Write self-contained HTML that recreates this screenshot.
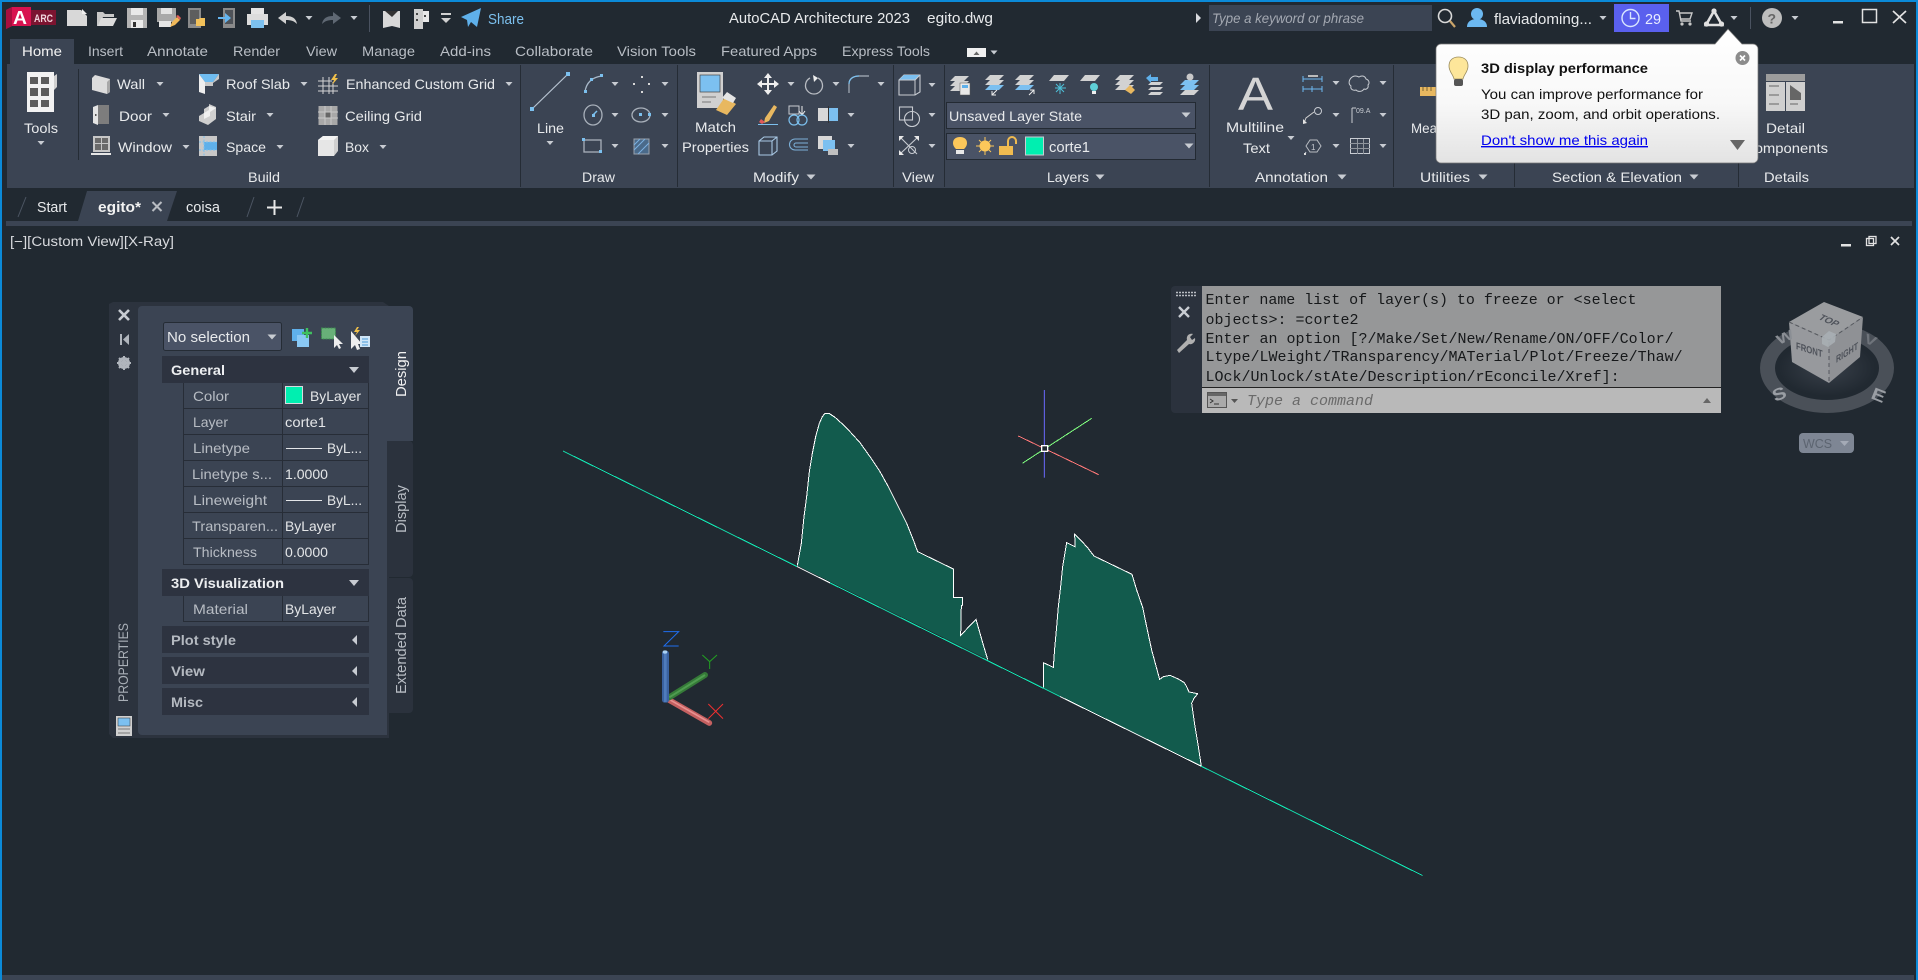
<!DOCTYPE html>
<html><head><meta charset="utf-8"><title>AutoCAD Architecture 2023 egito.dwg</title>
<style>
html,body{margin:0;padding:0;background:#212931;overflow:hidden;width:1918px;height:980px}
svg{display:block;position:absolute;left:0;top:0}
text{font-family:"Liberation Sans",sans-serif;font-size:14px;fill:#e8eaec}
.t{fill:#b9bec5}
.lab{fill:#b8bdc4}
.val{fill:#e4e6e8}
.h{font-weight:bold;fill:#eceef0}
.h2{font-weight:bold;fill:#b4b9c0}
.m{font-family:"Liberation Mono",monospace;font-size:15px;fill:#16181a}
.tip{fill:#111}
.ln{shape-rendering:crispEdges}
</style></head>
<body>
<svg width="1918" height="980" viewBox="0 0 1918 980" xmlns="http://www.w3.org/2000/svg">
<defs>
<path id="c" d="M-3.5-2h7L0 2z" fill="#c8ccd2"/>
<path id="cb" d="M-4.5-2.5h9L0 2.5z" fill="#c8ccd2"/>
<path id="cl" d="M2-5v10l-5-5z" fill="#c8ccd2"/>
<linearGradient id="tg" x1="0" y1="0" x2="0" y2="1"><stop offset="0" stop-color="#fff"/><stop offset=".55" stop-color="#f8f8f8"/><stop offset="1" stop-color="#e3e3e3"/></linearGradient>
<radialGradient id="cg" cx=".5" cy=".5" r=".5"><stop offset="0" stop-color="#39404a"/><stop offset="1" stop-color="#212931"/></radialGradient>
<clipPath id="wh"><rect x="797" y="500" width="33" height="200"/><rect x="1060" y="600" width="141" height="250"/></clipPath>
</defs>

<rect width="1918" height="980" fill="#212931"/>

<!-- window border -->
<rect width="1918" height="2" fill="#0b8ad8"/>
<rect width="2" height="980" fill="#0b8ad8"/>
<rect x="1916" width="2" height="980" fill="#0b8ad8"/>

<!-- LOGO -->
<path d="M6 10l6-3h19v19H12l-6 3z" fill="#d8124f"/>
<path d="M6 10l6-3v19l-6 3z" fill="#a80f3e"/>
<rect x="31" y="10" width="25" height="15" fill="#7c1430"/>
<text x="13" y="24" style="font-size:18px;font-weight:bold;fill:#fff" textLength="14" lengthAdjust="spacingAndGlyphs">A</text>
<text x="34" y="22" style="font-size:11px;font-weight:bold;fill:#f0d5dc" textLength="19" lengthAdjust="spacingAndGlyphs">ARC</text>

<!-- QAT icons -->
<path d="M67 10h14l6 6v10H67z" fill="#d8d8d8"/><path d="M82 9l5 5h-5z" fill="#eee"/>
<path d="M97 26V12h6l2 2h9v3h-11l-3 9z" fill="#c8c8c8"/><path d="M101 18h16l-4 8H98z" fill="#dcdcdc"/>
<path d="M127 8h20v20h-20z" fill="#b4b4b4"/><rect x="131" y="8" width="12" height="7" fill="#e8e8e8"/><rect x="131" y="20" width="12" height="8" fill="#ececec"/><rect x="133" y="22" width="3" height="5" fill="#333"/>
<path d="M157 8h19v14h-19z" fill="#a8a8a8"/><rect x="161" y="8" width="11" height="6" fill="#e2e2e2"/><rect x="159" y="21" width="12" height="6" fill="#e6e6e6"/><path d="M170 27l2-5 5-5 3 3-5 5z" fill="#f0b95a"/><path d="M176 16l2-1 3 3-1 2z" fill="#e0605a"/>
<rect x="188" y="8" width="13" height="20" fill="#8a8a8a"/><rect x="190" y="10" width="9" height="14" fill="#5e5e5e"/><path d="M196 19h3l1-1h5v8h-9z" fill="#f2c15a"/>
<rect x="223" y="8" width="12" height="20" fill="#8a8a8a"/><rect x="225" y="10" width="8" height="14" fill="#4e5258"/><path d="M218 17h7v-4l6 5-6 5v-4h-7z" fill="#64b5f0"/>
<rect x="251" y="8" width="13" height="7" fill="#e4e4e4"/><rect x="247" y="14" width="21" height="11" fill="#dcdcdc"/><rect x="251" y="20" width="13" height="8" fill="#7cc0ee"/>
<path d="M278 18l8-6v4c6 0 10 2 11 8-3-3-6-4-11-4v4z" fill="#d0d0d0"/>
<use href="#c" x="309" y="18"/>
<path d="M341 18l-8-6v4c-6 0-10 2-11 8 3-3 6-4 11-4v4z" fill="#5f6873"/>
<use href="#c" x="354" y="18"/>
<rect x="369" y="5" width="1" height="27" fill="#4a5260"/>
<path d="M383 11h17v17l-8-2-9 2z" fill="#d8d8d8"/><path d="M385 11h13l-6 6z" fill="#333"/>
<rect x="414" y="9" width="9" height="20" fill="#cfcfcf"/><rect x="423" y="11" width="6" height="11" fill="#e8e8e8"/><rect x="416" y="13" width="2" height="2" fill="#444"/><rect x="416" y="19" width="2" height="2" fill="#444"/><rect x="424" y="15" width="2" height="2" fill="#444"/>
<rect x="441" y="13" width="10" height="2" fill="#d0d0d0"/><path d="M441 18h10l-5 5z" fill="#d0d0d0"/>
<path d="M461 17l20-9-4 19-6-5-3 5-1-7z" fill="#5fb0ea"/>
<text x="488" y="24" style="fill:#7cc0ee;font-size:15px" textLength="36" lengthAdjust="spacingAndGlyphs">Share</text>

<!-- title -->
<text x="729" y="23" style="font-size:15px" textLength="181" lengthAdjust="spacingAndGlyphs">AutoCAD Architecture 2023</text>
<text x="927" y="23" style="font-size:15px" textLength="66" lengthAdjust="spacingAndGlyphs">egito.dwg</text>

<!-- title right -->
<path d="M1196 13l5 5-5 5z" fill="#d8dade"/>
<rect x="1209" y="5" width="223" height="26" fill="#3b4453"/>
<text x="1212" y="23" style="font-style:italic;fill:#a4a9b2" textLength="152" lengthAdjust="spacingAndGlyphs">Type a keyword or phrase</text>
<circle cx="1445" cy="16" r="6.5" fill="none" stroke="#d8d8d8" stroke-width="1.6"/><path d="M1450 21l5 6" stroke="#c9a46a" stroke-width="2.2"/>
<circle cx="1477" cy="14" r="6" fill="#6cb8f0"/><path d="M1467 27c0-6 5-8 10-8s10 2 10 8z" fill="#6cb8f0"/>
<text x="1494" y="24" style="font-size:15px" textLength="98" lengthAdjust="spacingAndGlyphs">flaviadoming...</text>
<use href="#c" x="1603" y="18"/>
<rect x="1614" y="4" width="55" height="28" fill="#5a60ee"/>
<circle cx="1630.5" cy="18" r="8.5" fill="none" stroke="#d8e6ff" stroke-width="1.4"/><path d="M1630.5 12v6.5h5" fill="none" stroke="#d8e6ff" stroke-width="1.4"/>
<text x="1645" y="24" style="font-size:15px;fill:#e8ecff" textLength="16" lengthAdjust="spacingAndGlyphs">29</text>
<path d="M1676 11h3l2 10h10M1680 13h12l-2 6h-9" fill="none" stroke="#c8c8c8" stroke-width="1.4"/><circle cx="1682" cy="24" r="1.6" fill="#c8c8c8"/><circle cx="1690" cy="24" r="1.6" fill="#c8c8c8"/>
<path d="M1714 11l-8 14h16z" fill="none" stroke="#e0e0e0" stroke-width="2.6"/><circle cx="1714" cy="11" r="2.6" fill="#e0e0e0"/><circle cx="1706.5" cy="24" r="2.6" fill="#e0e0e0"/><circle cx="1721.5" cy="24" r="2.6" fill="#e0e0e0"/>
<use href="#c" x="1734" y="18"/>
<rect x="1750" y="7" width="1" height="22" fill="#4a5260"/>
<circle cx="1772" cy="18" r="10" fill="#bdbdbd"/><text x="1767.5" y="23.5" style="font-size:14px;font-weight:bold;fill:#666">?</text>
<use href="#c" x="1795" y="18"/>
<rect x="1833" y="21" width="10" height="2.5" fill="#e2e2e2"/>
<rect x="1862.5" y="9.5" width="14" height="13" fill="none" stroke="#e2e2e2" stroke-width="1.5"/>
<path d="M1893 11l13 12M1906 11l-13 12" stroke="#e2e2e2" stroke-width="1.7"/>

<!-- TABS -->
<rect x="10" y="39" width="64" height="26" fill="#3b4453"/>
<g class="tabs">
<text x="22" y="56" style="fill:#f2f2f2" textLength="40" lengthAdjust="spacingAndGlyphs">Home</text>
<text x="88" y="56" class="t" textLength="35" lengthAdjust="spacingAndGlyphs">Insert</text>
<text x="147" y="56" class="t" textLength="61" lengthAdjust="spacingAndGlyphs">Annotate</text>
<text x="233" y="56" class="t" textLength="47" lengthAdjust="spacingAndGlyphs">Render</text>
<text x="306" y="56" class="t" textLength="31" lengthAdjust="spacingAndGlyphs">View</text>
<text x="362" y="56" class="t" textLength="53" lengthAdjust="spacingAndGlyphs">Manage</text>
<text x="440" y="56" class="t" textLength="51" lengthAdjust="spacingAndGlyphs">Add-ins</text>
<text x="515" y="56" class="t" textLength="78" lengthAdjust="spacingAndGlyphs">Collaborate</text>
<text x="617" y="56" class="t" textLength="79" lengthAdjust="spacingAndGlyphs">Vision Tools</text>
<text x="721" y="56" class="t" textLength="96" lengthAdjust="spacingAndGlyphs">Featured Apps</text>
<text x="842" y="56" class="t" textLength="88" lengthAdjust="spacingAndGlyphs">Express Tools</text>
</g>
<rect x="967" y="48" width="19" height="9" fill="#f0f0f0"/><path d="M973.5 55l3-3.5 3 3.5z" fill="#666"/>
<use href="#c" x="994" y="52.5"/>

<!-- RIBBON -->
<rect x="7" y="64" width="1907" height="124" fill="#3b4453"/>
<g fill="#252c35">
<rect x="78" y="69" width="1" height="91"/>
<rect x="520" y="65" width="1" height="122"/>
<rect x="677" y="65" width="1" height="122"/>
<rect x="893" y="65" width="1" height="122"/>
<rect x="944" y="65" width="1" height="122"/>
<rect x="1209" y="65" width="1" height="122"/>
<rect x="1393" y="65" width="1" height="122"/>
<rect x="1514" y="65" width="1" height="122"/>
<rect x="1738" y="65" width="1" height="122"/>
</g>

<!-- panel titles -->
<text x="248" y="182" textLength="32" lengthAdjust="spacingAndGlyphs">Build</text>
<text x="582" y="182" textLength="33" lengthAdjust="spacingAndGlyphs">Draw</text>
<text x="753" y="182" textLength="46" lengthAdjust="spacingAndGlyphs">Modify</text><use href="#cb" x="811" y="177"/>
<text x="902" y="182" textLength="32" lengthAdjust="spacingAndGlyphs">View</text>
<text x="1047" y="182" textLength="42" lengthAdjust="spacingAndGlyphs">Layers</text><use href="#cb" x="1100" y="177"/>
<text x="1255" y="182" textLength="73" lengthAdjust="spacingAndGlyphs">Annotation</text><use href="#cb" x="1342" y="177"/>
<text x="1420" y="182" textLength="50" lengthAdjust="spacingAndGlyphs">Utilities</text><use href="#cb" x="1483" y="177"/>
<text x="1552" y="182" textLength="130" lengthAdjust="spacingAndGlyphs">Section &amp; Elevation</text><use href="#cb" x="1694" y="177"/>
<text x="1764" y="182" textLength="45" lengthAdjust="spacingAndGlyphs">Details</text>

<!-- Tools -->
<rect x="27" y="72" width="27" height="40" fill="#f2f2f2"/><path d="M54 76l3-2v13l-3 3z" fill="#d0d0d0"/>
<g fill="#5c5c5c"><rect x="30" y="77" width="8" height="7"/><rect x="41" y="77" width="8" height="7"/><rect x="30" y="88" width="8" height="8"/><rect x="41" y="88" width="8" height="8"/><rect x="30" y="100" width="8" height="7"/><rect x="41" y="100" width="8" height="7"/></g>
<text x="24" y="133" textLength="34" lengthAdjust="spacingAndGlyphs">Tools</text>
<use href="#c" x="41" y="143"/>

<!-- Build -->
<path d="M92 78l3-3 15 4v13l-3 2-15-4z" fill="#dcdcdc"/><path d="M107 82l3-3v13l-3 2z" fill="#a8a8a8"/>
<text x="117" y="89" textLength="28" lengthAdjust="spacingAndGlyphs">Wall</text><use href="#c" x="160" y="84"/>
<path d="M98 105l11 0v19H98z" fill="#7d7d7d"/><path d="M93 107l5-2v20l-5-2z" fill="#e4e4e4"/><rect x="95" y="114" width="1.5" height="2" fill="#555"/>
<text x="119" y="121" textLength="33" lengthAdjust="spacingAndGlyphs">Door</text><use href="#c" x="166" y="115"/>
<rect x="93" y="136" width="17" height="16" fill="#c6c6c6"/><g fill="#6a6a6a"><rect x="95" y="138" width="6" height="5"/><rect x="102" y="138" width="6" height="5"/><rect x="95" y="144" width="6" height="6"/><rect x="102" y="144" width="6" height="6"/></g><rect x="91" y="153" width="20" height="2" fill="#e6e6e6"/>
<text x="118" y="152" textLength="54" lengthAdjust="spacingAndGlyphs">Window</text><use href="#c" x="186" y="147"/>

<path d="M199 74h20l-6 8h-8z" fill="#6fbcf0"/><path d="M199 74l6 8v12l-6-2z" fill="#efefef"/><path d="M205 82h8l6-8v5l-6 4v3h-8z" fill="#c8c8c8"/>
<text x="226" y="89" textLength="64" lengthAdjust="spacingAndGlyphs">Roof Slab</text><use href="#c" x="304" y="84"/>
<path d="M199 116l5-3v-4l5-3v-2l7 3v12l-8 6-9-4z" fill="#cfcfcf"/><path d="M204 113l5-3v-4l7 2-6 4v4l-6 3z" fill="#f0f0f0"/>
<text x="226" y="121" textLength="30" lengthAdjust="spacingAndGlyphs">Stair</text><use href="#c" x="270" y="115"/>
<rect x="199" y="136" width="18" height="20" fill="#c8c8c8"/><rect x="204" y="142" width="13" height="8" fill="#5fb0ea"/><path d="M204 136v20M199 142h18M199 150h18" stroke="#7cc0ee" stroke-width="1" stroke-dasharray="2 1.5" fill="none"/>
<text x="226" y="152" textLength="40" lengthAdjust="spacingAndGlyphs">Space</text><use href="#c" x="280" y="147"/>

<path d="M323 77v17M329 77v17M333 82v12M318 81h14M318 86h20M318 91h20" stroke="#d4d4d4" stroke-width="1" fill="none"/><path d="M335 74l-4 6h3l-2 5 6-7h-3l2-4z" fill="#f0c04a"/>
<text x="346" y="89" textLength="149" lengthAdjust="spacingAndGlyphs">Enhanced Custom Grid</text><use href="#c" x="509" y="84"/>
<rect x="318.500" y="106" width="19" height="19" fill="#a8a8a8"/><path d="M325 106v19M331 106v19M318 112h20M318 118h20" stroke="#c8c8c8"/><rect x="325.500" y="112.500" width="5" height="5" fill="#666"/>
<text x="345" y="121" textLength="77" lengthAdjust="spacingAndGlyphs">Ceiling Grid</text>
<path d="M318 140l5-4h15v15l-4 5h-16z" fill="#cfcfcf"/><path d="M318 140h16v16h-16z" fill="#e6e6e6"/><path d="M318 140l5-4h15l-4 4z" fill="#f4f4f4"/>
<text x="345" y="152" textLength="24" lengthAdjust="spacingAndGlyphs">Box</text><use href="#c" x="383" y="147"/>

<!-- Draw -->
<path d="M532 109l36-35" stroke="#b8c4d2" stroke-width="1.2"/><rect x="530" y="107" width="4" height="4" fill="#7cc0ee"/><rect x="566" y="72" width="4" height="4" fill="#7cc0ee"/>
<text x="537" y="133" textLength="27" lengthAdjust="spacingAndGlyphs">Line</text><use href="#c" x="550" y="143"/>
<path d="M585 92c1-9 7-15 17-16" fill="none" stroke="#a8b8c8" stroke-width="1.3"/><rect x="584" y="90" width="3" height="3" fill="#7cc0ee"/><rect x="590" y="78" width="3" height="3" fill="#7cc0ee"/><rect x="600" y="74" width="3" height="3" fill="#7cc0ee"/><use href="#c" x="615" y="84"/>
<g fill="#d8d8d8"><rect x="633" y="83" width="2" height="2"/><rect x="641" y="76" width="2" height="2"/><rect x="648" y="83" width="2" height="2"/><rect x="641" y="91" width="2" height="2"/></g><use href="#c" x="665" y="84"/>
<ellipse cx="593" cy="115" rx="9" ry="10" fill="none" stroke="#a8b0ba" stroke-width="1.3"/><path d="M593 115l4-4" stroke="#7cc0ee" stroke-width="1.5"/><rect x="592" y="114" width="3" height="3" fill="#7cc0ee"/><use href="#c" x="615" y="115"/>
<ellipse cx="641" cy="115" rx="9" ry="7" fill="none" stroke="#a8b0ba" stroke-width="1.3"/><rect x="639" y="113" width="3" height="3" fill="#7cc0ee"/><rect x="648" y="113" width="3" height="3" fill="#7cc0ee"/><use href="#c" x="665" y="115"/>
<rect x="584" y="140" width="17" height="12" fill="none" stroke="#a8b0ba" stroke-width="1.3"/><rect x="582" y="138" width="3" height="3" fill="#7cc0ee"/><rect x="599" y="150" width="3" height="3" fill="#7cc0ee"/><use href="#c" x="615" y="146"/>
<rect x="634" y="139" width="15" height="15" fill="#4a6a8a" stroke="#9aa2ac"/><path d="M634 150l11-11M638 154l11-11M634 145l6-6" stroke="#7cb0e0"/><use href="#c" x="665" y="146"/>

<!-- Modify -->
<rect x="697" y="72" width="26" height="36" fill="#d0d0d0"/><rect x="700" y="75" width="20" height="17" fill="#7cc0f0" stroke="#444" stroke-width=".7"/><path d="M702 97h14M702 102h9" stroke="#777"/><path d="M716 110l9-13 11 7-9 11z" fill="#e8b860"/><path d="M722 98l5-6 9 6-3 5z" fill="#e4e4e4"/>
<text x="695" y="132" textLength="41" lengthAdjust="spacingAndGlyphs">Match</text>
<text x="682" y="152" textLength="67" lengthAdjust="spacingAndGlyphs">Properties</text>
<path d="M768 73l4 5h-3v5h5v-3l5 4-5 4v-3h-5v5h3l-4 5-4-5h3v-5h-5v3l-5-4 5-4v3h5v-5h-3z" fill="#eee"/><use href="#c" x="791" y="84"/>
<path d="M818 78a8.5 8.5 0 1 1-8 0" fill="none" stroke="#b8bcc2" stroke-width="1.3"/><path d="M813 75l5 3-4 4z" fill="#eee"/><use href="#c" x="836" y="84"/>
<path d="M849 93V84c0-5 4-8 10-8h10" fill="none" stroke="#a8b0ba" stroke-width="1.2"/><path d="M849 84c0-5 4-8 10-8" fill="none" stroke="#7cc0ee" stroke-width="1.2"/><use href="#c" x="881" y="84"/>
<path d="M765 118l9-13 3 2-8 14-5 2z" fill="#e8b860"/><path d="M761 119l4 3-3 2-3-2z" fill="#e05a5a"/><rect x="758" y="124" width="20" height="1" fill="#7cc0ee"/>
<rect x="789" y="106" width="10" height="8" fill="none" stroke="#c8ccd2"/><path d="M802 106v8m-3-3l3 4 3-4" stroke="#eee" fill="none"/><circle cx="794" cy="120" r="5" fill="none" stroke="#7cc0ee" stroke-width="1.2"/><circle cx="802" cy="120" r="5" fill="none" stroke="#7cc0ee" stroke-width="1.2"/>
<rect x="818" y="108" width="10" height="13" fill="#d8d8d8"/><rect x="829" y="108" width="9" height="13" fill="#7cc0f0"/><rect x="828" y="106" width="1" height="17" fill="#333"/><use href="#c" x="851" y="115"/>
<path d="M759 141l5-4h13v14l-5 4h-13zM759 141h13v14M772 141l5-4" fill="none" stroke="#a8c8e4" stroke-width="1.1"/>
<path d="M808 139h-13a5 5 0 0 0 0 11h13M808 143h-12a2 2 0 0 0 0 4h12" fill="none" stroke="#7cb0d8" stroke-width="1.1"/>
<rect x="818" y="136" width="14" height="13" fill="#d8d8d8"/><rect x="823" y="140" width="12" height="11" fill="#7cc0f0"/><rect x="828" y="149" width="10" height="6" fill="#c0c0c0"/><use href="#c" x="851" y="146"/>

<!-- View -->
<path d="M899 80l5-5h16v17l-5 3h-16z" fill="none" stroke="#c8ccd2" stroke-width="1.1"/><path d="M899 80l5-5h16l-5 5z" fill="#7cc0f0"/><path d="M899 80h16v15M915 80l5-5" fill="none" stroke="#c8ccd2" stroke-width="1"/><use href="#c" x="932" y="85"/>
<rect x="899.500" y="107" width="13" height="13" fill="none" stroke="#c8ccd2" stroke-width="1.1"/><circle cx="912" cy="119" r="7.5" fill="none" stroke="#c8ccd2" stroke-width="1.1"/><use href="#c" x="932" y="115"/>
<path d="M900 137l17 17M918 137l-18 17" stroke="#c8ccd2" stroke-width="1.1"/><path d="M899 136h5l-5 5zM919 136h-5l5 5zM899 155h5l-5-5z" fill="#e8e8e8"/><circle cx="912" cy="150" r="3.5" fill="none" stroke="#c8ccd2"/><use href="#c" x="932" y="146"/>

<!-- Layers row -->
<g fill="#d2d2d2">
<path d="M950 81l5-5h14l-5 5zM950 86l5-5h14l-5 5zM950 91l5-5h14l-5 5z"/><rect x="960" y="83" width="10" height="12" fill="#e8e8e8" stroke="#555" stroke-width=".5"/><rect x="962" y="85" width="6" height="3" fill="#5fb0ea"/>
<path d="M985 80l5-5h14l-5 5zM985 85l5-5h14l-5 5z"/><path d="M985 90l5-5h14l-5 5z" fill="#7cc0f0"/><path d="M997 90l-5 5m0-4v4h4" stroke="#eee" fill="none"/>
<path d="M1015 80l5-5h14l-5 5zM1015 85l5-5h14l-5 5z"/><path d="M1015 90l5-5h14l-5 5z" fill="#7cc0f0"/><path d="M1029 95l5-5m-4 0h4v4" stroke="#eee" fill="none"/>
<path d="M1049 81l5-6h15l-5 6z"/><path d="M1060 83v11M1055 88h11M1056 84l8 8M1064 84l-8 8" stroke="#4ec0d8" fill="none"/>
<path d="M1080 81l5-6h15l-5 6z"/><circle cx="1094" cy="87" r="4" fill="#5fd0d8"/><rect x="1092" y="91" width="4" height="3" fill="#eee"/>
<path d="M1115 80l5-5h14l-5 5zM1115 85l5-5h14l-5 5zM1115 90l5-5h14l-5 5z"/><path d="M1125 90l5-5 5 5-4 4z" fill="#e8b860"/>
<path d="M1151 82h12l-3 3h-12zM1151 87h12l-3 3h-12zM1151 92h12l-3 3h-12z"/><path d="M1146 78l5-4v3h7v4h-7v2z" fill="#5fb0ea"/>
<path d="M1180 85l5-5h14l-5 5zM1180 90l5-5h14l-5 5z" fill="#7cc0f0"/><path d="M1180 95l5-5h14l-5 5z"/><circle cx="1190" cy="77" r="3.5" fill="#c8c8c8"/>
</g>

<!-- Layer combos -->
<rect x="946.500" y="102.500" width="249" height="26" fill="#4a5366" stroke="#232a33"/>
<text x="949" y="121" textLength="133" lengthAdjust="spacingAndGlyphs">Unsaved Layer State</text><use href="#cb" x="1186" y="115"/>
<rect x="946.500" y="133.500" width="249" height="26" fill="#4a5366" stroke="#232a33"/>
<path d="M953 143c0-4 3-6 7-6s7 2 7 6c0 3-2 5-3 6h-8c-1-1-3-3-3-6z" fill="#fcc75a"/><rect x="956" y="150" width="8" height="4" fill="#e8e8e8"/>
<circle cx="985" cy="146" r="5.5" fill="#fcc75a"/><path d="M985 137v18M976 146h18M979 140l12 12M991 140l-12 12" stroke="#fcc75a" stroke-width="1"/>
<rect x="999" y="146" width="14" height="9" fill="#f0bb50"/><path d="M1008 146v-5a4 4 0 0 1 8 0v3" fill="none" stroke="#f0bb50" stroke-width="2"/>
<rect x="1025.500" y="137" width="18" height="18" fill="#00efb0" stroke="#c8ccd2"/>
<text x="1049" y="152" style="font-size:15px" textLength="41" lengthAdjust="spacingAndGlyphs">corte1</text><use href="#cb" x="1189" y="146"/>

<!-- Annotation -->
<text x="1238" y="110" style="font-size:46px;fill:#d4d4d4" textLength="35" lengthAdjust="spacingAndGlyphs">A</text>
<text x="1226" y="132" textLength="58" lengthAdjust="spacingAndGlyphs">Multiline</text>
<text x="1243" y="153" textLength="27" lengthAdjust="spacingAndGlyphs">Text</text>
<use href="#c" x="1291" y="138"/>
<path d="M1303 79h19M1303 89h19M1303 76v6M1322 76v6M1303 86v6M1322 86v6M1312 86v6" stroke="#6cb8f0" fill="none"/><rect x="1308" y="75" width="10" height="2" fill="#bbb"/><use href="#c" x="1336" y="83"/>
<path d="M1351 78c3-3 6-2 8-1 3-2 6-1 7 2 3 1 4 4 2 6 1 3-2 5-4 4-2 3-6 3-8 1-3 1-6-1-5-4-3-2-2-6 0-8z" fill="none" stroke="#c8ccd2" stroke-width="1"/><use href="#c" x="1383" y="83"/>
<path d="M1304 123l2-5 8-6" fill="none" stroke="#d0d0d0"/><path d="M1303 124v-5l4 4z" fill="#e4e4e4"/><circle cx="1318" cy="111" r="3.5" fill="none" stroke="#c8ccd2"/><use href="#c" x="1336" y="115"/>
<path d="M1352 108v15M1352 108h4" stroke="#c8ccd2" fill="none"/><text x="1356" y="113" style="font-size:7px;fill:#c8ccd2">09.A</text><use href="#c" x="1383" y="115"/>
<path d="M1306 146l4-6h7l4 6-4 6h-7z" fill="none" stroke="#b8bcc2"/><text x="1311" y="150" style="font-size:8px;fill:#c8ccd2">1</text><path d="M1306 152l-1 2" stroke="#c8ccd2"/><rect x="1304" y="153" width="2" height="2" fill="#ddd"/><use href="#c" x="1336" y="146"/>
<rect x="1350.500" y="138.500" width="19" height="15" fill="none" stroke="#c8ccd2"/><path d="M1350 143.500h20M1350 148.500h20M1357.500 139v15M1363.500 139v15" stroke="#8f959d"/><use href="#c" x="1383" y="146"/>

<!-- Details icon + Text under tooltip -->
<rect x="1766" y="74" width="39" height="7" fill="#9c9c9c"/><rect x="1766" y="82" width="19" height="29" fill="#cfcfcf"/><rect x="1786" y="82" width="19" height="29" fill="#cfcfcf"/><path d="M1769 86h10M1769 95h10M1769 104h10M1790 104h8" stroke="#666"/><path d="M1790 85l11 8v7h-11z" fill="#666"/>
<text x="1766" y="133" textLength="39" lengthAdjust="spacingAndGlyphs">Detail</text>
<text x="1744" y="153" textLength="84" lengthAdjust="spacingAndGlyphs">Components</text>
<rect x="1420" y="87" width="16" height="9" fill="#e8b860"/><path d="M1423 87v4M1427 87v4M1431 87v4" stroke="#7a6330"/>
<text x="1411" y="133" textLength="52" lengthAdjust="spacingAndGlyphs">Measure</text>

<!-- TOOLTIP -->
<path d="M1441 44h274l13-15 14 15h11a5 5 0 0 1 5 5v109a5 5 0 0 1-5 5H1441a5 5 0 0 1-5-5V49a5 5 0 0 1 5-5z" fill="url(#tg)" stroke="#777" stroke-width=".7"/>
<path d="M1449 66c0-6 4-9 9.5-9s9.5 3 9.5 9c0 6-4 8-5 13h-9c-1-5-5-7-5-13z" fill="#fde69a" stroke="#9a8c5e" stroke-width=".8"/><rect x="1454" y="79" width="9" height="7" rx="2" fill="#555"/>
<text x="1481" y="73" class="tip" style="font-weight:bold;fill:#111" textLength="167" lengthAdjust="spacingAndGlyphs">3D display performance</text>
<text x="1481" y="99" style="fill:#111" textLength="222" lengthAdjust="spacingAndGlyphs">You can improve performance for</text>
<text x="1481" y="119" style="fill:#111" textLength="239" lengthAdjust="spacingAndGlyphs">3D pan, zoom, and orbit operations.</text>
<text x="1481" y="145" style="fill:#0000ee;text-decoration:underline" textLength="167" lengthAdjust="spacingAndGlyphs">Don't show me this again</text>
<path d="M1730 140h15l-7.5 10z" fill="#666"/>
<circle cx="1742.500" cy="58" r="7" fill="#8c8c8c"/><path d="M1740 55.5l5 5M1745 55.5l-5 5" stroke="#fff" stroke-width="1.6"/>

<!-- DOC TABS -->
<path d="M78 221l9-30h90l-10 30z" fill="#3b4453"/>
<path d="M18 217l8-20M247 217l7-20M297 217l7-20" stroke="#4c5563" stroke-width="1"/>
<text x="37" y="212" style="font-size:15px" fill="#e4e6e8" textLength="30" lengthAdjust="spacingAndGlyphs">Start</text>
<text x="98" y="212" style="font-size:15px;font-weight:bold;fill:#f2f2f2" textLength="43" lengthAdjust="spacingAndGlyphs">egito*</text>
<path d="M152.500 202l9 9M161.500 202l-9 9" stroke="#b8bcc2" stroke-width="2"/>
<text x="186" y="212" style="font-size:15px" textLength="34" lengthAdjust="spacingAndGlyphs">coisa</text>
<path d="M274.500 200v15M267 207.500h15" stroke="#e8e8e8" stroke-width="2"/>
<rect x="6" y="221" width="1906" height="5" fill="#3b4453"/>

<!-- viewport label -->
<text x="10" y="246" style="font-size:13.5px;fill:#d8dade" textLength="164" lengthAdjust="spacingAndGlyphs">[−][Custom View][X-Ray]</text>
<rect x="1841" y="244" width="10" height="2.5" fill="#e2e2e2"/>
<rect x="1866.500" y="238.500" width="7" height="7" fill="none" stroke="#e2e2e2" stroke-width="1.3"/><rect x="1869" y="236.500" width="7" height="7" fill="none" stroke="#e2e2e2" stroke-width="1.3"/>
<path d="M1891 237l8 8M1899 237l-8 8" stroke="#e2e2e2" stroke-width="1.7"/>

<!-- DRAWING -->
<g transform="translate(780 400) scale(.33333)">
<path d="M52 497L64 430 72 350 80 290 88 215 97 160 107 110 118 70 127 50 135 40 147 40 165 52 185 70 210 95 240 128 270 170 300 215 325 260 350 310 380 370 400 420 413 455 520 507 520 592 547 593 547 616 544 617 542 706 588 658 610 735 623 778Z" fill="#125b4d"/>
<path d="M52 497L64 430 72 350 80 290 88 215 97 160 107 110 118 70 127 50 135 40 147 40 165 52 185 70 210 95 240 128 270 170 300 215 325 260 350 310 380 370 400 420 413 455 520 507 520 592 547 593 547 616 544 617 542 706 588 658 610 735 623 778" fill="none" stroke="#fff" stroke-width="3" class="ln"/>
</g>
<g transform="translate(1030 520) scale(.33333)">
<path d="M40 503L40 428 70 442 74 385 80 320 85 260 92 200 98 140 110 68 135 80 134 43 150 58 172 82 192 108 306 163 320 210 338 262 350 320 365 390 389 478 400 470 420 466 445 477 463 488 470 500 477 516 503 521 492 535 485 550 495 620 505 680 514 738Z" fill="#125b4d"/>
<path d="M40 503L40 428 70 442 74 385 80 320 85 260 92 200 98 140 110 68 135 80 134 43 150 58 172 82 192 108 306 163 320 210 338 262 350 320 365 390 389 478 400 470 420 466 445 477 463 488 470 500 477 516 503 521 492 535 485 550 495 620 505 680 514 738" fill="none" stroke="#fff" stroke-width="3" class="ln"/>
</g>
<path d="M563 451L1422.500 875.500" stroke="#12e8b4" stroke-width="1" class="ln"/>
<g clip-path="url(#wh)"><path d="M563 451L1422.500 875.500" stroke="#fff" stroke-width="1" class="ln"/></g>

<!-- UCS -->
<g transform="translate(640 620) scale(.33333)">
<path d="M70 35h46L72 78h44" fill="none" stroke="#1f6ef0" stroke-width="3"/>
<path d="M82 240L208 312" stroke="#c46060" stroke-width="17" stroke-linecap="round" transform="translate(0 -3)"/>
<path d="M82 238L208 310" stroke="#e89090" stroke-width="5" transform="translate(0 -3)"/>
<path d="M88 232L195 165" stroke="#357a38" stroke-width="18" stroke-linecap="round"/>
<path d="M88 232L195 165" stroke="#4f9c50" stroke-width="6"/>
<rect x="66" y="92" width="21" height="156" rx="8" fill="#3a62a0"/><rect x="72" y="98" width="8" height="148" fill="#4f7cbc"/><ellipse cx="75" cy="96" rx="7" ry="5" fill="#a8d0f4"/>
<path d="M187 105l22 20 22-20M209 125v22" fill="none" stroke="#22a022" stroke-width="3"/>
<path d="M205 252l44 44M249 252l-44 44" stroke="#f03030" stroke-width="3"/>
</g>

<!-- crosshair -->
<g transform="translate(1000 380) scale(.33333)">
<path d="M133 30V293" stroke="#6a6aff" stroke-width="3"/>
<path d="M67 250L275 115" stroke="#80ff80" stroke-width="3" class="ln"/>
<path d="M55 168L296 284" stroke="#ff7878" stroke-width="3" class="ln"/>
<rect x="125" y="197" width="18" height="17" fill="#212931" stroke="#fff" stroke-width="4"/>
</g>

<!-- PROPERTIES PALETTE -->
<path d="M109 304l4-2h270l6 4v432H113l-4-4z" fill="#2c333e"/>
<path d="M138 310a4 4 0 0 1 4-4H387v429H142a4 4 0 0 1-4-4z" fill="#3b4453"/>
<path d="M387 306h22a4 4 0 0 1 4 4v131H387z" fill="#3b4453"/>
<path d="M387 441h22a4 4 0 0 1 4 4v128a4 4 0 0 1-4 4h-22z" fill="#2b323d"/>
<path d="M387 578h22a4 4 0 0 1 4 4v127a4 4 0 0 1-4 4h-22z" fill="#2b323d"/>
<path d="M119 310l10 10M129 310l-10 10" stroke="#c8ccd2" stroke-width="2.6"/>
<path d="M120 334v11h2v-11zM129 334v11l-6-5.5z" fill="#b0b5bc"/>
<circle cx="124" cy="363" r="4.5" fill="none" stroke="#b0b5bc" stroke-width="3"/><path d="M124 356v14M117 363h14M119 358l10 10M129 358l-10 10" stroke="#b0b5bc" stroke-width="2"/>
<text x="128" y="702" transform="rotate(-90 128 702)" style="fill:#a8aeb6" textLength="79" lengthAdjust="spacingAndGlyphs">PROPERTIES</text>
<rect x="116" y="716" width="16" height="20" fill="#d0d0d0"/><rect x="118" y="718" width="12" height="8" fill="#7cc0f0" stroke="#333" stroke-width=".5"/><path d="M118 729h12M118 733h12" stroke="#777"/>
<text x="406" y="397" transform="rotate(-90 406 397)" style="font-size:15px;fill:#f2f2f2" textLength="46" lengthAdjust="spacingAndGlyphs">Design</text>
<text x="406" y="533" transform="rotate(-90 406 533)" style="font-size:15px;fill:#b8bdc4" textLength="48" lengthAdjust="spacingAndGlyphs">Display</text>
<text x="406" y="694" transform="rotate(-90 406 694)" style="font-size:15px;fill:#b8bdc4" textLength="97" lengthAdjust="spacingAndGlyphs">Extended Data</text>

<rect x="163.500" y="322.500" width="118" height="28" rx="2" fill="#4a5366" stroke="#252c35"/>
<text x="167" y="342" style="font-size:15px" textLength="83" lengthAdjust="spacingAndGlyphs">No selection</text><use href="#cb" x="272" y="337"/>
<rect x="292" y="329" width="12" height="12" fill="#5fb0ea"/><rect x="297" y="335" width="12" height="12" fill="#8ac8f4"/><path d="M307 328v10M302 333h10" stroke="#3fc060" stroke-width="2.4"/>
<rect x="321.500" y="328" width="14" height="11" fill="#68b078" stroke="#3c8a50" stroke-dasharray="2 1"/><path d="M334 335v13l3-3 2 4 2-1-2-4h4z" fill="#eee"/>
<path d="M351 331l0 18 4-4 2 5 3-1-2-5h4z" fill="#eee"/><path d="M357 327l-3 5h3l-2 4 5-6h-3l2-3z" fill="#f0c04a"/><rect x="360" y="336" width="10" height="11" fill="#cfe6f8"/><path d="M362 339h6M362 342h6M362 345h6" stroke="#4a9ad8"/>

<!-- general -->
<rect x="162" y="356" width="207" height="27" fill="#2d3340"/>
<text x="171" y="375" class="h" textLength="54" lengthAdjust="spacingAndGlyphs">General</text><path d="M349 367h10l-5 6z" fill="#c8ccd2"/>
<g fill="none" stroke="#272d37" stroke-width="1">
<path d="M183.500 383V564.500H368.500V383M282.500 383V564.500M183.500 408.500H368.500M183.500 434.500H368.500M183.500 460.500H368.500M183.500 486.500H368.500M183.500 512.500H368.500M183.500 538.500H368.500"/>
<path d="M183.500 596V621.500H368.500V596M282.500 596V621.500"/>
</g>
<text x="193" y="401" class="lab" textLength="36" lengthAdjust="spacingAndGlyphs">Color</text>
<rect x="285.500" y="386.500" width="17" height="17" fill="#00efb0" stroke="#d8dade"/>
<text x="310" y="401" class="val" textLength="51" lengthAdjust="spacingAndGlyphs">ByLayer</text>
<text x="193" y="427" class="lab" textLength="35" lengthAdjust="spacingAndGlyphs">Layer</text>
<text x="285" y="427" class="val" textLength="41" lengthAdjust="spacingAndGlyphs">corte1</text>
<text x="193" y="453" class="lab" textLength="57" lengthAdjust="spacingAndGlyphs">Linetype</text>
<rect x="286" y="448" width="36" height="1" fill="#e4e6e8"/>
<text x="327" y="453" class="val" textLength="35" lengthAdjust="spacingAndGlyphs">ByL...</text>
<text x="192" y="479" class="lab" textLength="80" lengthAdjust="spacingAndGlyphs">Linetype s...</text>
<text x="285" y="479" class="val" textLength="43" lengthAdjust="spacingAndGlyphs">1.0000</text>
<text x="193" y="505" class="lab" textLength="74" lengthAdjust="spacingAndGlyphs">Lineweight</text>
<rect x="286" y="500" width="36" height="1" fill="#e4e6e8"/>
<text x="327" y="505" class="val" textLength="35" lengthAdjust="spacingAndGlyphs">ByL...</text>
<text x="192" y="531" class="lab" textLength="86" lengthAdjust="spacingAndGlyphs">Transparen...</text>
<text x="285" y="531" class="val" textLength="51" lengthAdjust="spacingAndGlyphs">ByLayer</text>
<text x="193" y="557" class="lab" textLength="64" lengthAdjust="spacingAndGlyphs">Thickness</text>
<text x="285" y="557" class="val" textLength="43" lengthAdjust="spacingAndGlyphs">0.0000</text>

<rect x="162" y="569" width="207" height="27" fill="#2d3340"/>
<text x="171" y="588" class="h" textLength="113" lengthAdjust="spacingAndGlyphs">3D Visualization</text><path d="M349 580h10l-5 6z" fill="#c8ccd2"/>
<text x="193" y="614" class="lab" textLength="55" lengthAdjust="spacingAndGlyphs">Material</text>
<text x="285" y="614" class="val" textLength="51" lengthAdjust="spacingAndGlyphs">ByLayer</text>

<rect x="162" y="626" width="207" height="27" fill="#2d3340"/>
<text x="171" y="645" class="h2" textLength="65" lengthAdjust="spacingAndGlyphs">Plot style</text><use href="#cl" x="355" y="640"/>
<rect x="162" y="657" width="207" height="27" fill="#2d3340"/>
<text x="171" y="676" class="h2" textLength="34" lengthAdjust="spacingAndGlyphs">View</text><use href="#cl" x="355" y="671"/>
<rect x="162" y="688" width="207" height="27" fill="#2d3340"/>
<text x="171" y="707" class="h2" textLength="32" lengthAdjust="spacingAndGlyphs">Misc</text><use href="#cl" x="355" y="702"/>

<!-- COMMAND LINE -->
<path d="M1171 290a4 4 0 0 1 4-4h27v127h-27a4 4 0 0 1-4-4z" fill="#2b323d"/>
<rect x="1202" y="286" width="519" height="101" fill="#969798"/>
<rect x="1202" y="387" width="519" height="1" fill="#222"/>
<rect x="1202" y="388" width="519" height="25" fill="#b9b9b9"/>
<path d="M1176 292.500h21M1176 295.500h21" stroke="#b8bcc2" stroke-width="1.5" stroke-dasharray="2 1" fill="none"/>
<path d="M1179 307l10 10M1189 307l-10 10" stroke="#c8ccd2" stroke-width="2.4"/>
<path d="M1177 350l10-10c-1-4 2-7 6-6l-3 3 2 3 3-2c1 4-3 7-6 6l-10 9z" fill="#b0b0b0"/>
<text x="1205.500" y="304" class="m" textLength="431">Enter name list of layer(s) to freeze or &lt;select</text>
<text x="1205.500" y="324" class="m">objects&gt;: =corte2</text>
<text x="1205.500" y="343" class="m">Enter an option [?/Make/Set/New/Rename/ON/OFF/Color/</text>
<text x="1205.500" y="361" class="m">Ltype/LWeight/TRansparency/MATerial/Plot/Freeze/Thaw/</text>
<text x="1205.500" y="381" class="m">LOck/Unlock/stAte/Description/rEconcile/Xref]:</text>
<rect x="1207.500" y="392.500" width="19" height="15" fill="#aaa" stroke="#555"/><rect x="1208" y="393" width="18" height="3" fill="#666"/><path d="M1210 399l3 2-3 2M1214 404h5" stroke="#333" fill="none"/>
<path d="M1231 399h7l-3.5 4z" fill="#555"/>
<text x="1247" y="405" class="m" style="font-style:italic;fill:#6a6a6a;font-size:15px">Type a command</text>
<path d="M1703 403h8l-4-5z" fill="#666"/>

<!-- VIEWCUBE -->
<ellipse cx="1827" cy="368" rx="48" ry="28" fill="url(#cg)"/>
<path fill-rule="evenodd" d="M1760 368a67 45 0 1 0 134 0a67 45 0 1 0-134 0zM1775 368a52 32 0 1 1 104 0a52 32 0 1 1-104 0z" fill="#4a5058"/>
<path d="M1824 302L1863 317 1829 340 1789 322z" fill="#9a9c9f"/>
<path d="M1789 322L1829 340V383L1792 362z" fill="#97999d"/>
<path d="M1863 317L1860 357 1829 383V340z" fill="#8f9195"/>
<path d="M1789 322L1829 340 1863 317M1829 342V383" fill="none" stroke="#55585e" stroke-width="1" stroke-dasharray="4 3"/>
<path d="M1822 337l7-6 7 3-1 8-7 5-6-3z" fill="#a8afb4" opacity=".9"/>
<text transform="matrix(.9 .4 -.55 .75 1818 319)" style="font-size:10px;font-weight:bold;font-style:italic;fill:#4e525a">TOP</text>
<text transform="matrix(.95 .3 0 1 1796 349)" style="font-size:10px;font-weight:bold;fill:#4e525a" textLength="28" lengthAdjust="spacingAndGlyphs">FRONT</text>
<text transform="matrix(.85 -.55 0 1 1836 363)" style="font-size:10px;font-weight:bold;fill:#4e525a" textLength="26" lengthAdjust="spacingAndGlyphs">RIGHT</text>
<text transform="translate(1779 345) rotate(-25) scale(1.1 .8)" style="font-size:17px;font-weight:bold;fill:#8a8e94">W</text>
<text transform="translate(1863 342) rotate(22) scale(1.1 .8)" style="font-size:17px;font-weight:bold;fill:#6f747b">V</text>
<text transform="translate(1775 402) rotate(-22) scale(1.15 .95)" style="font-size:18px;font-weight:bold;fill:#9a9ea4">S</text>
<text transform="translate(1870 398) rotate(22) scale(1.15 .95)" style="font-size:18px;font-weight:bold;fill:#9a9ea4">E</text>
<rect x="1799" y="433" width="55" height="20" rx="4" fill="#7e8694"/>
<text x="1803" y="448" style="font-size:13px;fill:#5c6470" textLength="29" lengthAdjust="spacingAndGlyphs">WCS</text>
<path d="M1840 441h9l-4.5 5z" fill="#a4aab6"/>

<!-- bottom bar -->
<rect x="2" y="975" width="1912" height="5" fill="#3b4453"/>
</svg>
</body></html>
